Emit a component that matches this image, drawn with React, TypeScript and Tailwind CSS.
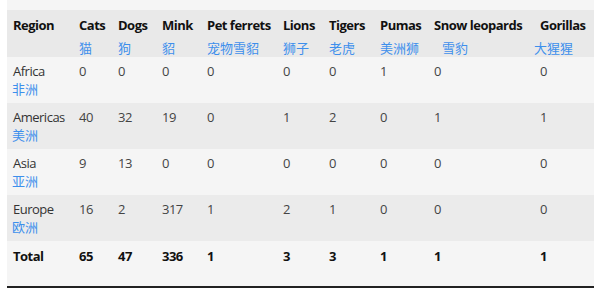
const columns = [
  { en: 'Region', zh: '', w: 'w-[66px]' },
  { en: 'Cats', zh: '猫', w: 'w-[39px]' },
  { en: 'Dogs', zh: '狗', w: 'w-[44px]' },
  { en: 'Mink', zh: '貂', w: 'w-[45px]' },
  { en: 'Pet ferrets', zh: '宠物雪貂', w: 'w-[76px]' },
  { en: 'Lions', zh: '狮子', w: 'w-[46px]' },
  { en: 'Tigers', zh: '老虎', w: 'w-[51px]' },
  { en: 'Pumas', zh: '美洲狮', w: 'w-[54px]' },
  { en: 'Snow leopards', zh: '雪豹', w: 'w-[106px]' },
  { en: 'Gorillas', zh: '大猩猩', w: 'w-[60px]' },
];

const rows = [
  { en: 'Africa', zh: '非洲', values: [0, 0, 0, 0, 0, 0, 1, 0, 0] },
  { en: 'Americas', zh: '美洲', values: [40, 32, 19, 0, 1, 2, 0, 1, 1] },
  { en: 'Asia', zh: '亚洲', values: [9, 13, 0, 0, 0, 0, 0, 0, 0] },
  { en: 'Europe', zh: '欧洲', values: [16, 2, 317, 1, 2, 1, 0, 0, 0] },
];

const totals = [65, 47, 336, 1, 3, 3, 1, 1, 1];

const font = { fontFamily: '"Open Sans", "Noto Sans CJK SC", sans-serif' };

export default function App() {
  return (
    <div className="w-[600px] h-[292px] bg-white" style={font}>
      <div className="ml-[7px] w-[587px] bg-[#f5f5f5] pt-[10px]">
        <table className="table-fixed w-[587px] border-collapse text-[13px] leading-[18px] tracking-[-0.5px]">
          <colgroup>
            {columns.map((c) => (
              <col key={c.en} className={c.w} />
            ))}
          </colgroup>
          <thead>
            <tr className="bg-[#e9e9e9] h-[46px]">
              {columns.map((c, i) => (
                <th key={c.en} className="align-top text-left pl-[6px] pt-[6px] font-bold text-[#111] whitespace-nowrap">
                  <div>{c.en}</div>
                  <div
                    className={`font-normal text-[#3d8fec] tracking-normal mt-[5px] ${
                      i === 8 ? 'pl-[8px]' : i === 9 ? '-ml-[6px]' : ''
                    }`}
                  >
                    {c.zh || '\u00a0'}
                  </div>
                </th>
              ))}
            </tr>
          </thead>
          <tbody>
            {rows.map((r, ri) => (
              <tr key={r.en} className={`h-[46px] ${ri % 2 === 0 ? 'bg-[#f5f5f5]' : 'bg-[#ebebeb]'}`}>
                <td className="align-top pl-[6px] pt-[5px] text-[#333] whitespace-nowrap">
                  <div>{r.en}</div>
                  <div className="text-[#3d8fec] tracking-normal -ml-[1px]">{r.zh}</div>
                </td>
                {r.values.map((v, vi) => (
                  <td key={vi} className="align-top pl-[6px] pt-[5px] text-[#444]">
                    {v}
                  </td>
                ))}
              </tr>
            ))}
            <tr className="h-[46px] bg-[#f5f5f5] border-b-2 border-[#222]">
              <td className="align-top pl-[6px] pt-[6px] font-bold text-[#111]">Total</td>
              {totals.map((v, vi) => (
                <td key={vi} className="align-top pl-[6px] pt-[6px] font-bold text-[#111]">
                  {v}
                </td>
              ))}
            </tr>
          </tbody>
        </table>
      </div>
    </div>
  );
}
